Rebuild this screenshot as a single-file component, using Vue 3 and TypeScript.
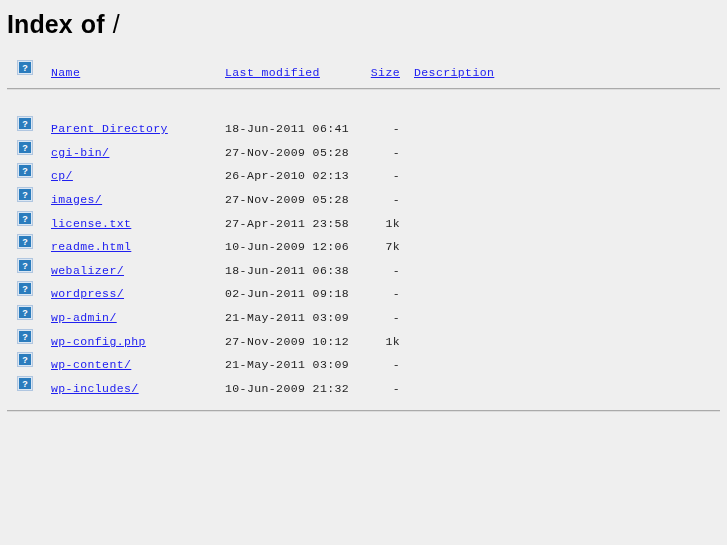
<template>
  <main class="page">
    <h1 class="title">Index of <span class="slash">/</span></h1>
    <div class="row head">
      <svg class="icon" viewBox="0 0 16 15" aria-hidden="true">
        <rect x="0.5" y="0.5" width="15" height="14" fill="#dbe7f3" stroke="#b0c6e0" />
        <rect x="2" y="2" width="12" height="11" fill="#2b7cbd" />
        <text x="8" y="10.5" class="mark">?</text>
      </svg>
      <a class="link name" href="#">Name</a>
      <a class="link date" href="#">Last modified</a>
      <a class="link size" href="#">Size</a>
      <a class="link desc" href="#">Description</a>
    </div>
    <hr class="rule first" />
    <div class="list">
      <div v-for="entry in entries" :key="entry.name" class="row">
        <svg class="icon" viewBox="0 0 16 15" aria-hidden="true">
          <rect x="0.5" y="0.5" width="15" height="14" fill="#dbe7f3" stroke="#b0c6e0" />
          <rect x="2" y="2" width="12" height="11" fill="#2b7cbd" />
          <text x="8" y="10.5" class="mark">?</text>
        </svg>
        <a class="link name" href="#">{{ entry.name }}</a>
        <span class="date">{{ entry.date }}</span>
        <span class="size">{{ entry.size }}</span>
      </div>
    </div>
    <hr class="rule" />
  </main>
</template>

<script setup lang="ts">
interface Entry {
  name: string;
  date: string;
  size: string;
}

const entries: Entry[] = [
  { name: 'Parent Directory', date: '18-Jun-2011 06:41', size: '-' },
  { name: 'cgi-bin/', date: '27-Nov-2009 05:28', size: '-' },
  { name: 'cp/', date: '26-Apr-2010 02:13', size: '-' },
  { name: 'images/', date: '27-Nov-2009 05:28', size: '-' },
  { name: 'license.txt', date: '27-Apr-2011 23:58', size: '1k' },
  { name: 'readme.html', date: '10-Jun-2009 12:06', size: '7k' },
  { name: 'webalizer/', date: '18-Jun-2011 06:38', size: '-' },
  { name: 'wordpress/', date: '02-Jun-2011 09:18', size: '-' },
  { name: 'wp-admin/', date: '21-May-2011 03:09', size: '-' },
  { name: 'wp-config.php', date: '27-Nov-2009 10:12', size: '1k' },
  { name: 'wp-content/', date: '21-May-2011 03:09', size: '-' },
  { name: 'wp-includes/', date: '10-Jun-2009 21:32', size: '-' },
];
</script>

<style>
html,
body {
  background: #efefef;
}
</style>

<style scoped>
.page {
  height: 545px;
  box-sizing: border-box;
  padding: 8px 7px 0;
  overflow: hidden;
  font-family: "Liberation Mono", monospace;
  font-size: 11.5px;
  letter-spacing: 0.4px;
  color: #222;
  filter: blur(0.3px);
}

.title {
  margin: 0 0 19px;
  font-family: "Liberation Sans", Arial, sans-serif;
  font-size: 25px;
  letter-spacing: 0.1px;
  word-spacing: 1px;
  line-height: 33px;
  color: #000;
}

.slash {
  font-weight: normal;
}

.row {
  display: grid;
  grid-template-columns: 16px 192px 144px 31px auto;
  padding-left: 10px;
  height: 23.64px;
  align-items: start;
  line-height: 14px;
  white-space: pre;
}

.head {
  height: 28px;
}

.icon {
  width: 16px;
  height: 15px;
}

.mark {
  font-family: "Liberation Sans", Arial, sans-serif;
  font-size: 9px;
  font-weight: bold;
  letter-spacing: 0;
  fill: #fff;
  text-anchor: middle;
}

.link {
  color: #2020f0;
}

.name,
.date,
.size,
.desc {
  margin-top: 6px;
}

.name {
  margin-left: 18px;
}

.size {
  text-align: right;
}

.desc {
  margin-left: 14px;
}

.rule {
  margin: 0;
  width: 713px;
  height: 0;
  border: 0;
  border-top: 1px solid #aaa;
  border-bottom: 1px solid #ddd;
}

.first {
  margin-bottom: 26px;
}

.list + .rule {
  margin-top: 10px;
}
</style>
